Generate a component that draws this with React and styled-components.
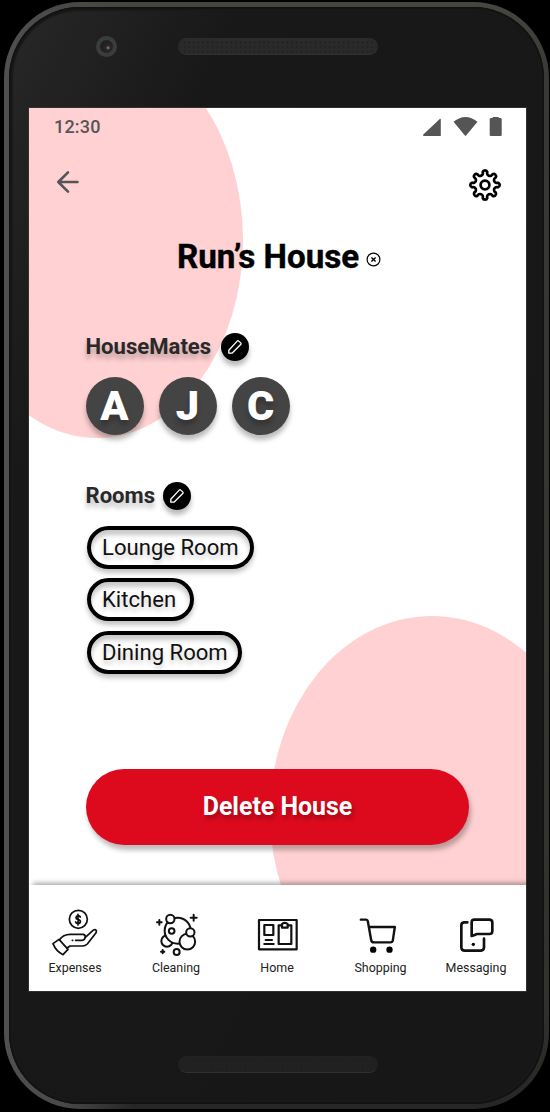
import React from "react";
import styled, { createGlobalStyle } from "styled-components";

const Global = createGlobalStyle`
  * { box-sizing: border-box; }
  body { margin: 0; background: #000; font-family: Roboto, "Liberation Sans", sans-serif; }
  svg { display: block; overflow: visible; flex: none; }
`;

const Page = styled.div`
  width: 550px;
  height: 1112px;
  padding: 2px 1px 3px 4px;
  background: #000;
  overflow: hidden;
`;

const Phone = styled.div`
  width: 545px;
  height: 1107px;
  padding: 5px;
  border-radius: 76px;
  background: linear-gradient(to right, #50504e 0, #484846 60px, transparent 130px),
    linear-gradient(to bottom, #464640 0, #383834 80px, #32322d 90%, #262624 100%);
`;

const Body = styled.div`
  height: 1097px;
  padding: 0 20px;
  border-radius: 71px;
  background: linear-gradient(115deg, #282828 0%, #181818 22%, #171717 100%);
  box-shadow: inset 0 0 3px 2px #101010, inset 0 0 0 4px #1d1d1d;
  display: flex;
  flex-direction: column;
`;

const Bezel = styled.div`
  height: ${(p) => p.$height}px;
  flex: none;
  display: grid;
  grid-template-columns: 149px 200px 1fr;
  align-items: start;
  padding-top: ${(p) => p.$top}px;
`;

const Camera = styled.div`
  width: 21px;
  height: 21px;
  margin: -2px 0 0 67px;
  border-radius: 50%;
  border: 4px solid #3b3d3d;
  background: radial-gradient(circle at 62% 60%, #75646c 0 1px, #2d262b 2px, #202022 6px);
`;

const Speaker = styled.div`
  grid-column: 2;
  height: 17px;
  border-radius: 9px;
  border: 1px solid ${(p) => (p.$dim ? "#222" : "#2c2c2c")};
  border-bottom-color: #303030;
  background: radial-gradient(circle, #1d1d1d 0 0.6px, transparent 1.2px) 3px 1px / 4.7px 4.7px,
    ${(p) => (p.$dim ? "#212121" : "#2a2a2a")};
`;

const Screen = styled.div`
  position: relative;
  width: 497px;
  height: 883px;
  flex: none;
  overflow: hidden;
  background: #fff;
  box-shadow: 0 0 0 1px #303030;
  display: flex;
  flex-direction: column;
`;

const Blob = styled.div`
  position: absolute;
  left: ${(p) => p.$x}px;
  top: ${(p) => p.$y}px;
  width: ${(p) => p.$w}px;
  height: ${(p) => p.$h}px;
  border-radius: 50%;
  background: #ffd1d3;
`;

const StatusBar = styled.div`
  position: relative;
  height: 36px;
  padding: 0 24px 0 25px;
  display: flex;
  align-items: center;
  justify-content: space-between;
  color: #555;
`;

const Time = styled.span`
  font-size: 18px;
  font-weight: 500;
  letter-spacing: 0.2px;
`;

const Toolbar = styled.div`
  position: relative;
  height: 81px;
  padding: 0 24px 0 27.5px;
  display: flex;
  align-items: center;
  justify-content: space-between;
`;

const IconButton = styled.button`
  padding: 0;
  border: 0;
  background: none;
  margin-top: ${(p) => p.$lift || 0}px;
`;

const Main = styled.main`
  position: relative;
  flex: 1;
  padding: 0 56.5px;
`;

const TitleRow = styled.div`
  height: 64px;
  padding-left: 91.5px;
  display: flex;
  align-items: center;
  gap: 6.5px;
`;

const Title = styled.h1`
  margin: 0;
  font-size: 33.2px;
  font-weight: 700;
  line-height: 40px;
  white-space: nowrap;
  -webkit-text-stroke: 0.4px #000;
`;

const SectionHead = styled.div`
  height: 28px;
  margin-top: ${(p) => p.$top}px;
  display: flex;
  align-items: center;
  gap: ${(p) => p.$gap}px;
`;

const SectionTitle = styled.h2`
  margin: -2px 0 0;
  font-size: 22.1px;
  font-weight: 700;
  line-height: 26px;
  color: #292929;
  text-shadow: 0 5px 5px rgba(0, 0, 0, 0.25);
`;

const EditButton = styled.button`
  width: 28px;
  height: 28px;
  padding: 0;
  border: 0;
  border-radius: 50%;
  background: #000;
  display: grid;
  place-items: center;
  box-shadow: 0 5px 5px rgba(0, 0, 0, 0.27);
`;

const Avatars = styled.div`
  margin-top: 16px;
  display: flex;
  gap: 15px;
`;

const Avatar = styled.div`
  width: 58px;
  height: 58px;
  border-radius: 50%;
  background: #444;
  color: #fff;
  font-size: 41.5px;
  font-weight: 900;
  line-height: 57px;
  text-align: center;
  box-shadow: 0 5px 5px rgba(0, 0, 0, 0.27);
  text-shadow: 0 5px 5px rgba(0, 0, 0, 0.25);
`;

const Rooms = styled.div`
  margin: 16px 0 0 1.5px;
  display: flex;
  flex-direction: column;
  align-items: flex-start;
  gap: 9.4px;
`;

const Room = styled.div`
  width: ${(p) => p.$width}px;
  height: 43px;
  padding: 0 11px;
  border: 4px solid #000;
  border-radius: 22px;
  font-size: 22.1px;
  line-height: 35px;
  color: #111;
  white-space: nowrap;
  text-shadow: 0 4px 4px rgba(0, 0, 0, 0.2);
  box-shadow: 0 4px 5px rgba(0, 0, 0, 0.24), inset 0 5px 5px rgba(0, 0, 0, 0.22);
`;

const DeleteButton = styled.button`
  display: block;
  width: 383px;
  height: 76px;
  margin-top: 95px;
  padding: 0 0 1px 1px;
  border: 0;
  border-radius: 38px;
  background: #dd0a1e;
  color: #fff;
  font: 700 24.9px Roboto, sans-serif;
  text-shadow: 2px 4px 4px rgba(0, 0, 0, 0.28);
  box-shadow: 2px 5px 5px rgba(0, 0, 0, 0.27);
`;

const Nav = styled.nav`
  position: relative;
  height: 106px;
  flex: none;
  background: #fff;
  padding-top: 23px;
  display: grid;
  grid-template-columns: 92px 110px 92px 115px 76px;
  box-shadow: 4px -2px 5px rgba(0, 0, 0, 0.35);
`;

const NavItem = styled.div`
  display: flex;
  flex-direction: column;
  align-items: center;
  gap: 5px;
  color: #222;
  font-size: 12.45px;
  line-height: 14px;
`;

const gearPath = (() => {
  const at = (deg, r = 13.2) => {
    const a = (deg * Math.PI) / 180;
    return `${(r * Math.cos(a)).toFixed(2)} ${(r * Math.sin(a)).toFixed(2)}`;
  };
  let d = `M${at(-10)}`;
  for (let i = 0; i < 8; i += 1) {
    d += `A2.4 2.4 0 0 1 ${at(i * 45 + 10)}A2.85 2.85 0 0 0 ${at(i * 45 + 35)}`;
  }
  return `${d}Z`;
})();

const GearIcon = () => (
  <svg width="34" height="34" viewBox="-17 -17 34 34" fill="none" stroke="#000" strokeWidth="2.7" strokeLinejoin="round">
    <path d={gearPath} />
    <circle r="4.4" />
  </svg>
);

const BackIcon = () => (
  <svg width="22" height="22" viewBox="0 0 22 22" fill="none" stroke="#555" strokeWidth="2.6" strokeLinecap="round" strokeLinejoin="round">
    <path d="M20.5 11H1.5M11 1.3 1.3 11l9.7 9.7" />
  </svg>
);

const StatusIcons = () => (
  <svg width="80" height="20" viewBox="-0.5 -0.5 80 20" fill="#555">
    <path d="M1.5 19.5C.5 19.5.1 18.8.8 18.1L17 2.7c.7-.7 1.3-.4 1.3.5v16.3z" />
    <path d="M31 5.2Q43-4.2 55 5.2L43.8 18.8q-.8 1-1.6 0z" />
    <path d="M70.2 1.4V.4h6v1h1.6c.9 0 1.4.6 1.4 1.4v15.4c0 .9-.5 1.4-1.4 1.4h-9.2c-.9 0-1.4-.5-1.4-1.4V2.8c0-.8.5-1.4 1.4-1.4z" />
  </svg>
);

const CloseSvg = styled.svg`
  margin-top: 5px;
`;

const CloseIcon = () => (
  <CloseSvg width="15" height="15" viewBox="0 0 15 15" fill="none" stroke="#000">
    <circle cx="7.5" cy="7.5" r="6.4" strokeWidth="1.2" />
    <path d="M5.4 5.4l4.2 4.2M9.6 5.4L5.4 9.6" strokeWidth="1.4" />
  </CloseSvg>
);

const PencilIcon = () => (
  <svg width="16" height="16" viewBox="0 0 16 16" fill="none" stroke="#fff" strokeWidth="1.3" strokeLinejoin="round">
    <path d="M1.8 14.2V11.2L10.2 2.1Q11 1.3 11.8 2.1L13.7 3.9Q14.5 4.7 13.7 5.5L5 14.2Z" />
  </svg>
);

const NavIcon = ({ x, width = 5, children }) => (
  <svg width="48" height="48" viewBox={`${x} 54 144 144`} fill="none" stroke="#111" strokeWidth={width} strokeLinecap="round" strokeLinejoin="round">
    {children}
  </svg>
);

const ExpensesIcon = () => (
  <NavIcon x={63} width={5.2}>
    <circle cx="145" cy="88" r="27" />
    <path d="M151 81Q149 77 144 77Q138 78 138 83Q138 87 145 89Q152 91 151 96Q150 101 144 101Q138 100 137 96M144 73V105" />
    <path d="M69 161L87 148L114 178L99 194Q78 184 69 161Z" />
    <path d="M88 150Q99 133 121 133H159Q166 134 166 140Q165 150 156 151H137M166 142L189 121Q196 116 199 122Q200 125 197 130L172 162Q166 168 157 168H120L111 174M127 151H128" />
  </NavIcon>
);

const CleaningIcon = () => (
  <NavIcon x={366} width={6}>
    <g fill="#fff">
      <circle cx="411" cy="153" r="17" />
      <circle cx="443" cy="122" r="39" />
      <circle cx="421" cy="87" r="12.5" />
      <circle cx="472" cy="155" r="23.5" />
      <circle cx="481" cy="127" r="12.5" />
      <circle cx="425" cy="123" r="8.5" />
      <circle cx="440" cy="186" r="9" />
    </g>
    <path d="M388 90V104M381 97H395M491 74V92M482 83H500M398 180V190M393 185H403" />
  </NavIcon>
);

const HomeIcon = () => (
  <NavIcon x={69} width={6.6}>
    <rect x="87" y="90" width="113" height="88" />
    <rect x="103" y="105" width="27" height="30" />
    <path d="M107 150H126M103 162H131M155 106H146V162H184V106H174" />
    <path d="M156 102Q164 95 173 102V113H156Z" />
  </NavIcon>
);

const ShoppingIcon = () => (
  <NavIcon x={379.5} width={7.2}>
    <path d="M391 89H407Q411 89 412 94L422 150Q423 157 430 157H480Q486 157 487 151L493 111H417" />
    <g fill="#000" stroke="none">
      <circle cx="428" cy="179" r="9.5" />
      <circle cx="477" cy="179" r="9.5" />
    </g>
  </NavIcon>
);

const MessagingIcon = () => (
  <NavIcon x={666} width={8}>
    <path d="M712 97H702Q694 98 694 106V173Q695 182 704 182H753Q761 181 762 173V146" />
    <path d="M725 138V97Q725 89 733 89H779Q787 90 787 98V124Q786 132 778 132H742Q739 132 736 134Z" />
    <circle cx="730" cy="163" r="5" fill="#000" stroke="none" />
  </NavIcon>
);

const rooms = [
  ["Lounge Room", 167],
  ["Kitchen", 107],
  ["Dining Room", 155],
];

const tabs = [
  ["Expenses", ExpensesIcon],
  ["Cleaning", CleaningIcon],
  ["Home", HomeIcon],
  ["Shopping", ShoppingIcon],
  ["Messaging", MessagingIcon],
];

export default function App() {
  return (
    <Page>
      <Global />
      <Phone>
        <Body>
          <Bezel $height={101} $top={31}>
            <Camera />
            <Speaker />
          </Bezel>
          <Screen>
            <Blob $x={-78} $y={-66} $w={292} $h={396} />
            <Blob $x={241} $y={508} $w={324} $h={396} />
            <StatusBar>
              <Time>12:30</Time>
              <StatusIcons />
            </StatusBar>
            <Toolbar>
              <IconButton $lift={-6} aria-label="Back"><BackIcon /></IconButton>
              <IconButton aria-label="Settings"><GearIcon /></IconButton>
            </Toolbar>
            <Main>
              <TitleRow>
                <Title>Run’s House</Title>
                <CloseIcon />
              </TitleRow>
              <SectionHead $top={44} $gap={9.5}>
                <SectionTitle>HouseMates</SectionTitle>
                <EditButton aria-label="Edit housemates"><PencilIcon /></EditButton>
              </SectionHead>
              <Avatars>
                {["A", "J", "C"].map((name) => <Avatar key={name}>{name}</Avatar>)}
              </Avatars>
              <SectionHead $top={47} $gap={7.5}>
                <SectionTitle>Rooms</SectionTitle>
                <EditButton aria-label="Edit rooms"><PencilIcon /></EditButton>
              </SectionHead>
              <Rooms>
                {rooms.map(([room, width]) => <Room key={room} $width={width}>{room}</Room>)}
              </Rooms>
              <DeleteButton>Delete House</DeleteButton>
            </Main>
            <Nav>
              {tabs.map(([label, Icon]) => (
                <NavItem key={label}><Icon />{label}</NavItem>
              ))}
            </Nav>
          </Screen>
          <Bezel $height={113} $top={65}>
            <Speaker $dim />
          </Bezel>
        </Body>
      </Phone>
    </Page>
  );
}
